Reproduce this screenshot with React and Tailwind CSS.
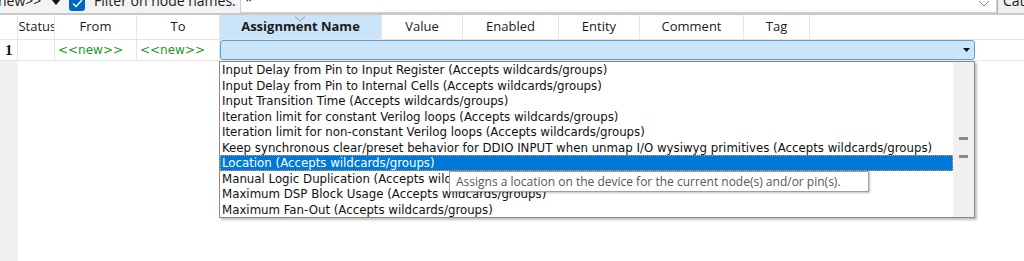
import React from "react";

const ui = { fontFamily: '"Open Sans", "Noto Sans", sans-serif' };
const tah = { fontFamily: '"DejaVu Sans", sans-serif', fontStretch: "condensed" };

const columns = [
  { label: "Status:", w: "w-[37px]" },
  { label: "From", w: "w-[82px]" },
  { label: "To", w: "w-[83px]" },
  { label: "Assignment Name", w: "w-[162px]", active: true },
  { label: "Value", w: "w-[81px]" },
  { label: "Enabled", w: "w-[96px]" },
  { label: "Entity", w: "w-[81px]" },
  { label: "Comment", w: "w-[104px]" },
  { label: "Tag", w: "w-[66px]" },
];

const options = [
  "Input Delay from Pin to Input Register (Accepts wildcards/groups)",
  "Input Delay from Pin to Internal Cells (Accepts wildcards/groups)",
  "Input Transition Time (Accepts wildcards/groups)",
  "Iteration limit for constant Verilog loops (Accepts wildcards/groups)",
  "Iteration limit for non-constant Verilog loops (Accepts wildcards/groups)",
  "Keep synchronous clear/preset behavior for DDIO INPUT when unmap I/O wysiwyg primitives (Accepts wildcards/groups)",
  "Location (Accepts wildcards/groups)",
  "Manual Logic Duplication (Accepts wildcards/groups)",
  "Maximum DSP Block Usage (Accepts wildcards/groups)",
  "Maximum Fan-Out (Accepts wildcards/groups)",
];

function Toolbar() {
  return (
    <div className="h-[15px] overflow-hidden bg-[#f3f3f3] border-b-2 border-[#c9c9c9]">
      <div className="flex items-center h-[26px] -mt-[13px] text-[14px] text-[#1a1a1a]" style={ui}>
        <span className="-ml-[2px] w-[42px] whitespace-nowrap">new&gt;&gt;</span>
        <svg width="10" height="6" viewBox="0 0 10 6" className="ml-[11px] mt-[4px]">
          <path d="M0 0 L10 0 L5 6 Z" fill="#111" />
        </svg>
        <span className="ml-[8px] w-[16px] h-[16px] mt-[6px] rounded-[3px] bg-[#0067c0] flex items-center justify-center">
          <svg width="11" height="9" viewBox="0 0 11 9">
            <path d="M1 4.5 L4 7.5 L10 1" stroke="#fff" strokeWidth="1.4" fill="none" />
          </svg>
        </span>
        <span className="ml-[9px] whitespace-nowrap">Filter on node names:</span>
        <div className="ml-[4px] flex-1 h-full bg-white border border-[#d0d0d0] flex items-center pl-[4px]">
          <span className="flex-1">*</span>
          <svg width="12" height="7" viewBox="0 0 12 7" className="mr-[6px] mt-[6px]">
            <path d="M1 1 L6 6 L11 1" stroke="#888" fill="none" />
          </svg>
        </div>
        <span className="w-[27px] h-full border-l border-[#b0b0b0] pl-[5px] overflow-hidden whitespace-nowrap bg-[#f0f0f0] flex items-center">Cat</span>
      </div>
    </div>
  );
}

function HeaderRow() {
  return (
    <div className="flex h-[25px] border-b border-[#e5e5e5] bg-white text-[13px] text-[#1a1a1a]" style={ui}>
      <div className="w-[18px] border-r border-[#e5e5e5]" />
      {columns.map((c) => (
        <div
          key={c.label}
          className={`${c.w} relative flex items-center justify-center border-r border-[#e5e5e5] whitespace-nowrap overflow-hidden ${
            c.active ? "bg-[#cce4f7] font-bold" : ""
          }`}
        >
          {c.active && (
            <svg width="12" height="6" viewBox="0 0 12 6" className="absolute top-[1px] left-[74px]">
              <path d="M1 0.5 L6 5 L11 0.5" stroke="#9a9a9a" fill="none" />
            </svg>
          )}
          <span className={c.label === "Status:" ? "ml-[6px]" : ""}>{c.label}</span>
        </div>
      ))}
    </div>
  );
}

function DataRow() {
  return (
    <div className="flex h-[21px] border-b border-[#e5e5e5] bg-white">
      <div className="w-[18px] border-r border-[#e5e5e5] flex items-center pl-[5px] text-[15px] font-bold text-[#111]" style={{ fontFamily: '"Liberation Serif", serif' }}>
        1
      </div>
      <div className="w-[37px] border-r border-[#e5e5e5]" />
      {[82, 83].map((w) => (
        <div
          key={w}
          className={`${w === 82 ? "w-[82px]" : "w-[83px]"} border-r border-[#e5e5e5] flex items-center pl-[3px] text-[12px] text-[#1e9a1e]`}
          style={{ fontFamily: '"DejaVu Sans", sans-serif' }}
        >
          &lt;&lt;new&gt;&gt;
        </div>
      ))}
      <div className="w-[755px] h-[20px] rounded-[3px] border border-[#5aa0de] bg-[#cce4f7] flex items-center justify-end pr-[4px]">
        <svg width="7" height="4" viewBox="0 0 7 4">
          <path d="M0 0 L7 0 L3.5 4 Z" fill="#111" />
        </svg>
      </div>
    </div>
  );
}

function Dropdown() {
  return (
    <div className="absolute left-[219px] top-[61px] w-[756px] h-[157px] bg-white border border-[#8a8a8a] shadow-[2px_2px_2px_rgba(0,0,0,0.25)] flex">
      <div className="flex-1 text-[13.1px] text-[#111]" style={tah}>
        {options.map((o, i) => (
          <div
            key={o}
            className={`h-[15.5px] leading-[15.5px] pl-[2px] whitespace-nowrap overflow-hidden ${
              i === 6 ? "bg-[#0078d7] text-white outline outline-1 outline-dotted outline-[#e0a060] -outline-offset-1" : ""
            }`}
          >
            {o}
          </div>
        ))}
      </div>
      <div className="w-[21px] bg-[#f0f0f0] flex flex-col items-center pt-[75px] gap-[15px]">
        <div className="w-[9px] h-[3px] bg-[#8a8a8a]" />
        <div className="w-[9px] h-[3px] bg-[#8a8a8a]" />
      </div>
    </div>
  );
}

function Tooltip() {
  return (
    <div
      className="absolute left-[449px] top-[171px] h-[21px] w-[420px] bg-white border border-[#a0a0a0] shadow-[1px_1px_2px_rgba(0,0,0,0.25)] flex items-center pl-[6px] text-[12px] text-[#575757] whitespace-nowrap"
      style={ui}
    >
      Assigns a location on the device for the current node(s) and/or pin(s).
    </div>
  );
}

export default function App() {
  return (
    <div className="relative w-[1024px] h-[261px] bg-white overflow-hidden">
      <Toolbar />
      <HeaderRow />
      <DataRow />
      <div className="flex h-[200px]">
        <div className="w-[18px] bg-[#f0f0f0]" />
      </div>
      <Dropdown />
      <Tooltip />
    </div>
  );
}
